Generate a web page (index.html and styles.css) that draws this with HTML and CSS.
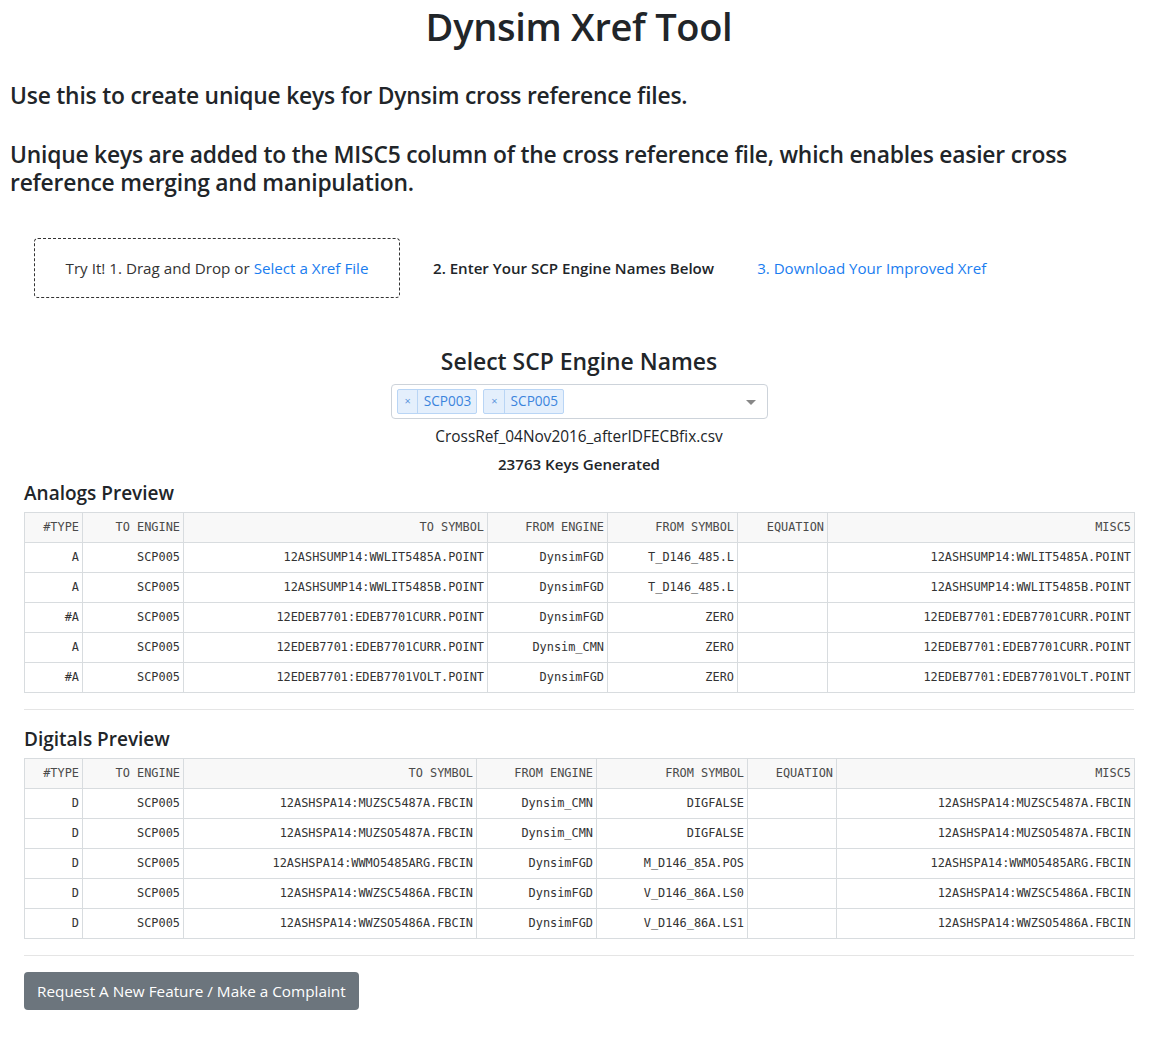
FILE: index.html
```html
<!DOCTYPE html>
<html lang="en">
<head>
<meta charset="utf-8">
<title>Dynsim Xref Tool</title>
<link rel="stylesheet" href="styles.css">
</head>
<body>
<div class="page">
  <h1 class="title">Dynsim Xref Tool</h1>
  <h3 class="lead">Use this to create unique keys for Dynsim cross reference files.</h3>
  <h3 class="lead lead-2">Unique keys are added to the MISC5 column of the cross reference file, which enables easier cross reference merging and manipulation.</h3>

  <div class="steps">
    <div class="dropzone"><span>Try It! 1. Drag and Drop or <a class="link" href="#">Select a Xref File</a></span></div>
    <div class="step-2">2. Enter Your SCP Engine Names Below</div>
    <a class="link step-3" href="#">3. Download Your Improved Xref</a>
  </div>

  <div class="engine">
    <h4 class="engine-title">Select SCP Engine Names</h4>
    <div class="select">
      <span class="tag"><span class="tag-x">×</span><span class="tag-label">SCP003</span></span>
      <span class="tag"><span class="tag-x">×</span><span class="tag-label">SCP005</span></span>
      <span class="select-arrow"></span>
    </div>
    <div class="filename">CrossRef_04Nov2016_afterIDFECBfix.csv</div>
    <div class="keys">23763 Keys Generated</div>
  </div>

  <div class="section section-first">
    <h5 class="section-title">Analogs Preview</h5>
    <table class="grid">
      <colgroup>
        <col class="a1"><col class="a2"><col class="a3"><col class="a4"><col class="a5"><col class="a6"><col class="a7">
      </colgroup>
      <thead>
        <tr><th>#TYPE</th><th>TO ENGINE</th><th>TO SYMBOL</th><th>FROM ENGINE</th><th>FROM SYMBOL</th><th>EQUATION</th><th>MISC5</th></tr>
      </thead>
      <tbody>
        <tr><td>A</td><td>SCP005</td><td>12ASHSUMP14:WWLIT5485A.POINT</td><td>DynsimFGD</td><td>T_D146_485.L</td><td></td><td>12ASHSUMP14:WWLIT5485A.POINT</td></tr>
        <tr><td>A</td><td>SCP005</td><td>12ASHSUMP14:WWLIT5485B.POINT</td><td>DynsimFGD</td><td>T_D146_485.L</td><td></td><td>12ASHSUMP14:WWLIT5485B.POINT</td></tr>
        <tr><td>#A</td><td>SCP005</td><td>12EDEB7701:EDEB7701CURR.POINT</td><td>DynsimFGD</td><td>ZERO</td><td></td><td>12EDEB7701:EDEB7701CURR.POINT</td></tr>
        <tr><td>A</td><td>SCP005</td><td>12EDEB7701:EDEB7701CURR.POINT</td><td>Dynsim_CMN</td><td>ZERO</td><td></td><td>12EDEB7701:EDEB7701CURR.POINT</td></tr>
        <tr><td>#A</td><td>SCP005</td><td>12EDEB7701:EDEB7701VOLT.POINT</td><td>DynsimFGD</td><td>ZERO</td><td></td><td>12EDEB7701:EDEB7701VOLT.POINT</td></tr>
      </tbody>
    </table>
  </div>

  <hr class="rule">

  <div class="section">
    <h5 class="section-title">Digitals Preview</h5>
    <table class="grid">
      <colgroup>
        <col class="d1"><col class="d2"><col class="d3"><col class="d4"><col class="d5"><col class="d6"><col class="d7">
      </colgroup>
      <thead>
        <tr><th>#TYPE</th><th>TO ENGINE</th><th>TO SYMBOL</th><th>FROM ENGINE</th><th>FROM SYMBOL</th><th>EQUATION</th><th>MISC5</th></tr>
      </thead>
      <tbody>
        <tr><td>D</td><td>SCP005</td><td>12ASHSPA14:MUZSC5487A.FBCIN</td><td>Dynsim_CMN</td><td>DIGFALSE</td><td></td><td>12ASHSPA14:MUZSC5487A.FBCIN</td></tr>
        <tr><td>D</td><td>SCP005</td><td>12ASHSPA14:MUZSO5487A.FBCIN</td><td>Dynsim_CMN</td><td>DIGFALSE</td><td></td><td>12ASHSPA14:MUZSO5487A.FBCIN</td></tr>
        <tr><td>D</td><td>SCP005</td><td>12ASHSPA14:WWMO5485ARG.FBCIN</td><td>DynsimFGD</td><td>M_D146_85A.POS</td><td></td><td>12ASHSPA14:WWMO5485ARG.FBCIN</td></tr>
        <tr><td>D</td><td>SCP005</td><td>12ASHSPA14:WWZSC5486A.FBCIN</td><td>DynsimFGD</td><td>V_D146_86A.LS0</td><td></td><td>12ASHSPA14:WWZSC5486A.FBCIN</td></tr>
        <tr><td>D</td><td>SCP005</td><td>12ASHSPA14:WWZSO5486A.FBCIN</td><td>DynsimFGD</td><td>V_D146_86A.LS1</td><td></td><td>12ASHSPA14:WWZSO5486A.FBCIN</td></tr>
      </tbody>
    </table>
  </div>

  <hr class="rule">

  <div class="actions">
    <button class="btn" type="button">Request A New Feature / Make a Complaint</button>
  </div>
</div>
</body>
</html>
```
FILE: styles.css
```css
* { box-sizing: border-box; }

html, body {
  margin: 0;
  padding: 0;
  background: #fff;
}

body {
  font-family: "Open Sans", "Noto Sans", sans-serif;
  color: #212529;
  font-size: 15.2px;
  line-height: 1.5;
}

.page {
  width: 1162px;
  padding: 0 14px 40px 10px;
}

.title {
  margin: 0;
  padding-top: 2px;
  text-align: center;
  font-size: 38px;
  font-weight: 600;
  line-height: 48px;
  letter-spacing: -0.3px;
}

.lead {
  margin: 32px 0 0;
  font-size: 22.8px;
  font-weight: 600;
  line-height: 28px;
  letter-spacing: -0.2px;
}

.lead-2 {
  margin-top: 31px;
  padding-right: 40px;
}

.steps {
  margin-top: 41px;
  margin-left: 24px;
  display: flex;
  align-items: center;
}

.dropzone {
  width: 366px;
  height: 60px;
  border: 1px dashed #333;
  border-radius: 4px;
  display: flex;
  align-items: center;
  justify-content: center;
  font-size: 15.2px;
  color: #333;
}

.link {
  color: #1a7df0;
  text-decoration: none;
}

.step-2 {
  margin-left: 33px;
  font-size: 15.1px;
  font-weight: 600;
}

.step-3 {
  margin-left: 43px;
  font-size: 15.1px;
}

.engine {
  margin-top: 48px;
  display: flex;
  flex-direction: column;
  align-items: center;
}

.engine-title {
  margin: 0;
  font-size: 22.9px;
  font-weight: 600;
  line-height: 32px;
}

.select {
  margin-top: 6px;
  width: 377px;
  height: 35px;
  border: 1px solid #cdd3da;
  border-radius: 4px;
  display: flex;
  align-items: center;
  padding-left: 5px;
  gap: 6px;
  position: relative;
}

.tag {
  display: flex;
  align-items: stretch;
  height: 25px;
  background: #e4effc;
  border: 1px solid #b9d5f5;
  border-radius: 2px;
  color: #3b84dc;
  font-size: 13.6px;
}

.tag-x {
  display: flex;
  align-items: center;
  padding: 0 6px 0 7px;
  border-right: 1px solid #b9d5f5;
  font-size: 11px;
  color: #5f97dc;
}

.tag-label {
  display: flex;
  align-items: center;
  padding: 0 5px 0 6px;
}

.select-arrow {
  position: absolute;
  right: 11px;
  top: 15px;
  width: 0;
  height: 0;
  border-left: 5px solid transparent;
  border-right: 5px solid transparent;
  border-top: 5px solid #888;
}

.filename {
  margin-top: 6px;
  font-size: 15.4px;
  line-height: 24px;
}

.keys {
  margin-top: 3px;
  font-size: 15.1px;
  font-weight: 600;
  line-height: 24px;
}

.section {
  margin-left: 14px;
  margin-right: 14px;
}

.section-first {
  margin-top: 4px;
}

.section-title {
  margin: 0 0 6px;
  font-size: 19px;
  font-weight: 600;
  line-height: 26px;
}

.grid {
  width: 1110px;
  table-layout: fixed;
  border-collapse: collapse;
  font-family: "DejaVu Sans Mono", "Liberation Mono", monospace;
  font-size: 11.9px;
  color: #333;
}

.grid th,
.grid td {
  height: 30px;
  padding: 1px 3px 0 2px;
  text-align: right;
  border: 1px solid #d8dcdf;
  white-space: nowrap;
  overflow: hidden;
  font-weight: normal;
}

.grid th {
  background: #f8f8f8;
  color: #4a4a4a;
}

.a1 { width: 58px; }
.a2 { width: 101px; }
.a3 { width: 304px; }
.a4 { width: 120px; }
.a5 { width: 130px; }
.a6 { width: 90px; }
.a7 { width: 307px; }

.d1 { width: 58px; }
.d2 { width: 101px; }
.d3 { width: 293px; }
.d4 { width: 120px; }
.d5 { width: 151px; }
.d6 { width: 89px; }
.d7 { width: 298px; }

.rule {
  margin: 16px 14px 16px 14px;
  border: 0;
  border-top: 1px solid #e5e5e5;
}

.actions {
  margin-left: 14px;
  margin-top: 16px;
}

.btn {
  height: 38px;
  padding: 0 13px;
  background: #6c757d;
  color: #fff;
  border: 0;
  border-radius: 4px;
  font-family: "Open Sans", "Noto Sans", sans-serif;
  font-size: 15.3px;
}
```
